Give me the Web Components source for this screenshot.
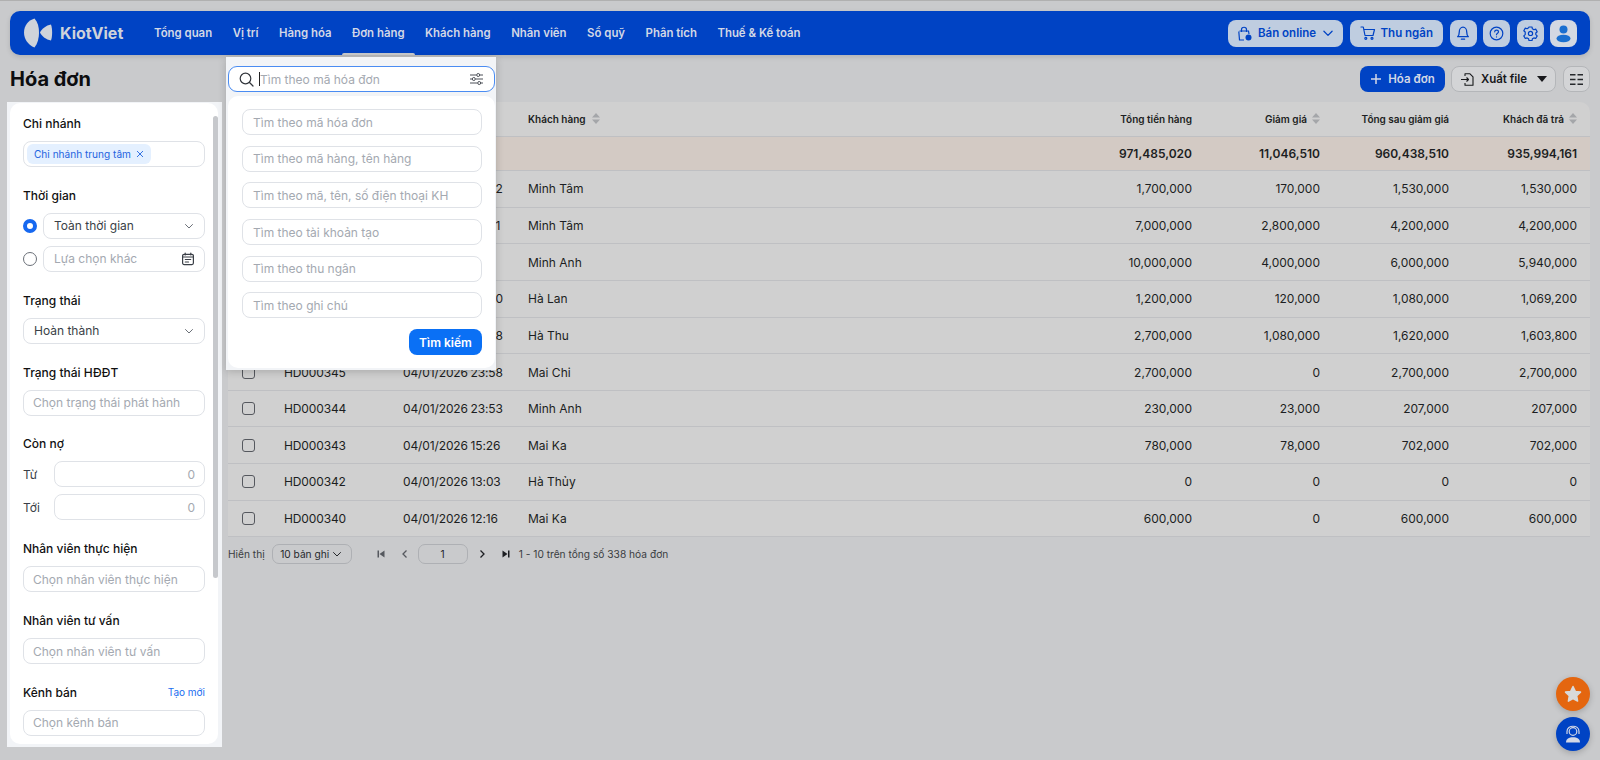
<!DOCTYPE html>
<html lang="vi">
<head>
<meta charset="utf-8">
<title>Hóa đơn</title>
<style>
    html, body { margin: 0; height: 100%; overflow: hidden; background: #c9cacc; font-family: Inter, "Liberation Sans", sans-serif; }
</style>
</head>
<body>
<kv-app></kv-app>
<script>
const chevron = `<svg width="12" height="12" viewBox="0 0 12 12" fill="none" stroke="currentColor" stroke-width="1" stroke-linecap="round" stroke-linejoin="round"><path d="M2.500 4.500 6 8l3.500-3.500"/></svg>`;

class KvHeader extends HTMLElement {
    constructor() {
        super();
        this.shadowroot = this.attachShadow({mode: 'open'});
    }
    connectedCallback() {
        const nav = ['Tổng quan', 'Vị trí', 'Hàng hóa', 'Đơn hàng', 'Khách hàng', 'Nhân viên', 'Sổ quỹ', 'Phân tích', 'Thuế & Kế toán'];
        this.shadowroot.innerHTML = `
            <style>
                :host { display: flex; align-items: center; height: 44px; margin: 0 10px; padding: 0 13px 0 14px; box-sizing: border-box; background: #0043c4; border-radius: 10px; box-shadow: 0 2px 5px rgba(0,0,0,.12); }
                .logo { display: flex; align-items: center; gap: 7px; width: 130px; color: #cfd3da; font-size: 16px; font-weight: 700; }
                nav { display: flex; gap: 20.500px; flex: 1; height: 100%; }
                nav a { position: relative; display: flex; align-items: center; color: #d3d8e6; font-size: 11.400px; font-weight: 600; white-space: nowrap; }
                nav a.active::after { content: ''; position: absolute; left: -10px; right: -10px; bottom: 0; height: 2px; background: #c9cacc; border-radius: 2px 2px 0 0; }
                .tools { display: flex; gap: 6.500px; }
                .btn { display: flex; align-items: center; justify-content: center; gap: 5px; height: 27px; min-width: 27px; box-sizing: border-box; background: #bfcde0; color: #0043c4; border-radius: 8px; font-size: 11.500px; font-weight: 600; white-space: nowrap; }
                .online { width: 115px; }
                .cashier { width: 93.500px; }
            </style>
            <div class="logo">
                <svg width="29" height="30" viewBox="0 0 29 30" fill="#cfd3da"><path d="M10.500.5C4 2.500 0 8 0 14.500S4 27 10.500 29.500C13.800 25.500 15 20 15 14.500S13.800 4 10.500.5Z"/><path d="M16 14.500C18 10.500 22 7.500 27 6.500 28.500 10.500 28.500 18.500 27 22.500 22 21.500 18 18.500 16 14.500Z"/></svg>
                <span>KiotViet</span>
            </div>
            <nav>${nav.map(n => `<a class="${n === 'Đơn hàng' ? 'active' : ''}">${n}</a>`).join('')}</nav>
            <div class="tools">
                <div class="btn online">
                    <svg width="17" height="17" viewBox="0 0 17 17" fill="none" stroke="currentColor" stroke-width="1.200"><path d="M3.500 6H12.500L13 9M8 15H3.500L2.800 6.500M5.500 7V4.500C5.500 1.500 10.500 1.500 10.500 4.500V7"/><circle cx="12.500" cy="12.500" r="3" fill="currentColor" stroke="none"/></svg>
                    <span>Bán online</span>
                    <svg width="14" height="14" viewBox="0 0 12 12" fill="none" stroke="currentColor" stroke-width="1.100" stroke-linecap="round" stroke-linejoin="round"><path d="M2.500 4.500 6 8l3.500-3.500"/></svg>
                </div>
                <div class="btn cashier">
                    <svg width="16" height="16" viewBox="0 0 16 16" fill="none" stroke="currentColor" stroke-width="1.200" stroke-linejoin="round" stroke-linecap="round"><path d="M1 2h2.300l1.700 8.500h8L14.500 4.500H3.700"/><circle cx="5.800" cy="13.300" r="1"/><circle cx="12" cy="13.300" r="1"/></svg>
                    <span>Thu ngân</span>
                </div>
                <div class="btn">
                    <svg width="16" height="16" viewBox="0 0 15 15" fill="none" stroke="currentColor" stroke-width="1.200" stroke-linecap="round" stroke-linejoin="round"><path d="M2.500 11h10c-1-1-1.500-2-1.500-4.500C11 4 9.500 2 7.500 2S4 4 4 6.500C4 9 3.500 10 2.500 11ZM6 13.300h3"/></svg>
                </div>
                <div class="btn">
                    <svg width="15" height="15" viewBox="0 0 15 15" fill="none" stroke="currentColor" stroke-width="1.200" stroke-linecap="round"><circle cx="7.500" cy="7.500" r="6.300"/><path d="M5.700 5.800C5.700 3.500 9.500 3.500 9.500 5.800 9.500 7.200 7.500 7.200 7.500 8.700M7.500 10.800v.2"/></svg>
                </div>
                <div class="btn">
                    <svg width="15" height="15" viewBox="0 0 15 15" fill="none" stroke="currentColor" stroke-width="1.200" stroke-linejoin="round"><path d="M6 1.200h3l.4 1.800 1.500.9 1.800-.6 1.500 2.600-1.400 1.300v1.600l1.400 1.300-1.500 2.600-1.800-.6-1.500.9-.4 1.800H6l-.4-1.800-1.500-.9-1.800.6-1.500-2.600 1.400-1.300V6.200L.8 4.900l1.500-2.600 1.800.6 1.500-.9Z" transform="translate(0 -.2)"/><circle cx="7.500" cy="7.400" r="2.100"/></svg>
                </div>
                <div class="btn" style="background:#d3d8e2">
                    <svg width="19" height="19" viewBox="0 0 19 19" fill="#1a6fd0"><circle cx="9.500" cy="5.500" r="4"/><ellipse cx="9.500" cy="14.500" rx="7" ry="3.800"/></svg>
                </div>
            </div>
        `;
    }
}

class KvField extends HTMLElement {
    constructor() {
        super();
        this.shadowroot = this.attachShadow({mode: 'open'});
    }
    connectedCallback() {
        const link = this.getAttribute('link');
        this.shadowroot.innerHTML = `
            <style>
                :host { display: flex; flex-direction: column; gap: 9px; }
                .label { display: flex; justify-content: space-between; align-items: center; height: 17px; font-size: 12px; font-weight: 500; color: #111; }
                .link { font-size: 10px; font-weight: 400; color: #1a6ef0; }
                .body { display: flex; flex-direction: column; gap: 7px; }
            </style>
            <div class="label"><span>${this.getAttribute('label')}</span>${link ? `<span class="link">${link}</span>` : ''}</div>
            <div class="body"><slot></slot></div>
        `;
    }
}

class KvInput extends HTMLElement {
    constructor() {
        super();
        this.shadowroot = this.attachShadow({mode: 'open'});
    }
    connectedCallback() {
        const value = this.getAttribute('value');
        const pad = this.getAttribute('pad') || '9';
        this.shadowroot.innerHTML = `
            <style>
                :host { display: flex; align-items: center; flex: 1 1 auto; width: 100%; min-width: 0; height: 26px; box-sizing: border-box; padding: 0 9px 0 ${pad}px; background: #fff; border: 1px solid #dfe2e7; border-radius: 8px; font-size: 12px; color: #a4a9b1; }
                :host([end]) { justify-content: flex-end; }
                .text { flex: 1; white-space: nowrap; }
                .value { color: #3a3f47; }
                :host([end]) .text { flex: none; }
                ::slotted(*) { flex: none; }
            </style>
            <span class="text ${value ? 'value' : ''}">${value || this.getAttribute('placeholder') || ''}</span>
            <slot></slot>
        `;
    }
}

class KvRadio extends HTMLElement {
    constructor() {
        super();
        this.shadowroot = this.attachShadow({mode: 'open'});
    }
    connectedCallback() {
        this.shadowroot.innerHTML = `
            <style>
                :host { display: flex; align-items: center; gap: 6px; }
                .dot { width: 14px; height: 14px; box-sizing: border-box; flex: none; border-radius: 50%; border: 1px solid #6b7078; background: #fff; }
                :host([checked]) .dot { border: 4px solid #1668f0; }
            </style>
            <span class="dot"></span>
            <slot></slot>
        `;
    }
}

class KvSidebar extends HTMLElement {
    constructor() {
        super();
        this.shadowroot = this.attachShadow({mode: 'open'});
    }
    connectedCallback() {
        this.shadowroot.innerHTML = `
            <style>
                :host { position: relative; display: block; flex: none; width: 215px; height: 645px; margin-left: 7px; box-sizing: border-box; padding: 1px 4px 3px 3px; background: #f2f4f7; }
                .card { display: flex; flex-direction: column; gap: 19.850px; height: 100%; box-sizing: border-box; padding: 12px 13px 0 13px; overflow: hidden; background: #fff; border-radius: 10px; }
                .thumb { position: absolute; left: 206px; top: 14px; width: 5px; height: 462px; background: #c6c8cc; border-radius: 3px; }
                .tag { display: inline-flex; align-items: center; gap: 5px; height: 20px; margin-left: -6px; padding: 0 7px; background: #e4f0ff; color: #1f64e0; border-radius: 6px; font-size: 10.100px; white-space: nowrap; }
                .range { display: flex; align-items: center; }
                .range span { flex: none; width: 31px; font-size: 12px; color: #3a3f47; }
                .chip { display: flex; align-items: center; height: 26px; box-sizing: border-box; padding-left: 9px; background: #fff; border: 1px solid #dfe2e7; border-radius: 8px; }
                .arrow { display: flex; color: #6b7078; }
            </style>
            <div class="card">
                <kv-field label="Chi nhánh">
                    <div class="chip"><span class="tag">Chi nhánh trung tâm <svg width="8" height="8" viewBox="0 0 8 8" stroke="currentColor" stroke-width=".9"><path d="M1 1l6 6M7 1 1 7"/></svg></span></div>
                </kv-field>
                <kv-field label="Thời gian">
                    <kv-radio checked><kv-input value="Toàn thời gian" pad="10"><span class="arrow">${chevron}</span></kv-input></kv-radio>
                    <kv-radio><kv-input placeholder="Lựa chọn khác" pad="10"><svg width="14" height="14" viewBox="0 0 14 14" fill="none" stroke="#3a3f47" stroke-width="1.200" stroke-linecap="round"><rect x="1.600" y="2.300" width="10.800" height="10.300" rx="1.500"/><path d="M4.200 1v2M9.800 1v2M1.800 5h10.500M4.300 7.500h5.400M4.300 10h3.200"/></svg></kv-input></kv-radio>
                </kv-field>
                <kv-field label="Trạng thái">
                    <kv-input value="Hoàn thành" pad="10"><span class="arrow">${chevron}</span></kv-input>
                </kv-field>
                <kv-field label="Trạng thái HĐĐT"><kv-input placeholder="Chọn trạng thái phát hành"></kv-input></kv-field>
                <kv-field label="Còn nợ">
                    <div class="range"><span>Từ</span><kv-input end placeholder="0"></kv-input></div>
                    <div class="range"><span>Tới</span><kv-input end placeholder="0"></kv-input></div>
                </kv-field>
                <kv-field label="Nhân viên thực hiện"><kv-input placeholder="Chọn nhân viên thực hiện"></kv-input></kv-field>
                <kv-field label="Nhân viên tư vấn"><kv-input placeholder="Chọn nhân viên tư vấn"></kv-input></kv-field>
                <kv-field label="Kênh bán" link="Tạo mới"><kv-input placeholder="Chọn kênh bán"></kv-input></kv-field>
            </div>
            <div class="thumb"></div>
        `;
    }
}

class KvTable extends HTMLElement {
    constructor() {
        super();
        this.shadowroot = this.attachShadow({mode: 'open'});
    }
    connectedCallback() {
        // first five rows: the search popover covers code and date, only the last digit sticks out
        const rows = [
            ['', '2', 'Minh Tâm', '1,700,000', '170,000', '1,530,000', '1,530,000'],
            ['', '1', 'Minh Tâm', '7,000,000', '2,800,000', '4,200,000', '4,200,000'],
            ['', '', 'Minh Anh', '10,000,000', '4,000,000', '6,000,000', '5,940,000'],
            ['', '0', 'Hà Lan', '1,200,000', '120,000', '1,080,000', '1,069,200'],
            ['', '8', 'Hà Thu', '2,700,000', '1,080,000', '1,620,000', '1,603,800'],
            ['HD000345', '04/01/2026 23:58', 'Mai Chi', '2,700,000', '0', '2,700,000', '2,700,000'],
            ['HD000344', '04/01/2026 23:53', 'Minh Anh', '230,000', '23,000', '207,000', '207,000'],
            ['HD000343', '04/01/2026 15:26', 'Mai Ka', '780,000', '78,000', '702,000', '702,000'],
            ['HD000342', '04/01/2026 13:03', 'Hà Thủy', '0', '0', '0', '0'],
            ['HD000340', '04/01/2026 12:16', 'Mai Ka', '600,000', '0', '600,000', '600,000'],
        ];
        const sort = `<svg class="sort" width="8" height="11" viewBox="0 0 8 11" fill="#a4a6a9"><path d="M4 0 8 4.500H0ZM0 6.500H8L4 11Z"/></svg>`;
        this.shadowroot.innerHTML = `
            <style>
                :host { display: block; font-size: 12px; color: #1c1e22; }
                .row { display: grid; grid-template-columns: 56px 119px 125px 1fr 130px 128px 129px 128px; align-items: center; height: 36.650px; box-sizing: border-box; padding-right: 13px; border-bottom: 1px solid #bfc0c3; }
                .head { height: 34.500px; font-size: 10px; font-weight: 600; background: #d0d0d0; border-radius: 10px 10px 0 0; }
                .total { height: 34.500px; font-weight: 600; background: #d3cac4; }
                .body { background: #d0d0d0; }
                .num { text-align: right; }
                .code { letter-spacing: -.12px; word-spacing: -.6px; }
                .tail { padding-left: 92.500px; }
                .head .sortable { display: flex; align-items: center; gap: 6px; }
                .head .num { display: flex; justify-content: flex-end; align-items: center; gap: 5px; }
                .box { display: block; width: 13px; height: 13px; margin-left: 14px; border: 1px solid #55585e; border-radius: 3px; box-sizing: border-box; }
            </style>
            <div class="row head">
                <span></span><span></span><span></span>
                <span class="sortable">Khách hàng ${sort}</span>
                <span class="num">Tổng tiền hàng</span>
                <span class="num">Giảm giá ${sort}</span>
                <span class="num">Tổng sau giảm giá</span>
                <span class="num">Khách đã trả ${sort}</span>
            </div>
            <div class="row total">
                <span></span><span></span><span></span><span></span>
                <span class="num">971,485,020</span>
                <span class="num">11,046,510</span>
                <span class="num">960,438,510</span>
                <span class="num">935,994,161</span>
            </div>
            <div class="body">
                ${rows.map(r => `
                    <div class="row">
                        <span class="box"></span>
                        <span class="code">${r[0]}</span><span class="code ${r[0] ? '' : 'tail'}">${r[1]}</span><span>${r[2]}</span>
                        <span class="num">${r[3]}</span><span class="num">${r[4]}</span><span class="num">${r[5]}</span><span class="num">${r[6]}</span>
                    </div>`).join('')}
            </div>
        `;
    }
}

class KvPagination extends HTMLElement {
    constructor() {
        super();
        this.shadowroot = this.attachShadow({mode: 'open'});
    }
    connectedCallback() {
        this.shadowroot.innerHTML = `
            <style>
                :host { display: flex; align-items: center; height: 20px; margin-top: 7px; font-size: 10.200px; color: #3a3d42; }
                .select { display: flex; align-items: center; justify-content: center; gap: 2px; width: 80px; height: 20px; margin-left: 7px; box-sizing: border-box; border: 1px solid #aeb0b4; border-radius: 7px; color: #26282c; }
                .pager { display: flex; align-items: center; margin-left: 24px; }
                .pager svg { display: block; flex: none; }
                .page { display: flex; align-items: center; justify-content: center; width: 50px; height: 20px; box-sizing: border-box; margin: 0 9px 0 8px; border: 1px solid #aeb0b4; border-radius: 7px; color: #26282c; }
                .count { margin-left: 8px; }
            </style>
            <span>Hiển thị</span>
            <div class="select">10 bản ghi ${chevron}</div>
            <div class="pager">
                <svg style="margin-right:14px" width="10" height="10" viewBox="0 0 10 10" fill="#55585e"><path d="M1.500 1.500H3V8.500H1.500ZM8.500 1.500V8.500L3.500 5Z"/></svg>
                <svg width="10" height="10" viewBox="0 0 10 10" fill="none" stroke="#55585e" stroke-width="1.300"><path d="M6.500 1.500 3 5l3.500 3.500"/></svg>
                <div class="page">1</div>
                <svg style="margin-right:14px" width="10" height="10" viewBox="0 0 10 10" fill="none" stroke="#1c1e22" stroke-width="1.300"><path d="M3.500 1.500 7 5 3.500 8.500"/></svg>
                <svg width="10" height="10" viewBox="0 0 10 10" fill="#1c1e22"><path d="M8.500 1.500H7V8.500H8.500ZM1.500 1.500V8.500L6.500 5Z"/></svg>
            </div>
            <span class="count">1 - 10 trên tổng số 338 hóa đơn</span>
        `;
    }
}

class KvSearchPopover extends HTMLElement {
    constructor() {
        super();
        this.shadowroot = this.attachShadow({mode: 'open'});
    }
    connectedCallback() {
        const fields = ['Tìm theo mã hóa đơn', 'Tìm theo mã hàng, tên hàng', 'Tìm theo mã, tên, số điện thoại KH', 'Tìm theo tài khoản tạo', 'Tìm theo thu ngân', 'Tìm theo ghi chú'];
        this.shadowroot.innerHTML = `
            <style>
                :host { position: absolute; left: 226px; top: 57px; width: 270px; height: 313px; box-sizing: border-box; padding: 9px 1px 2px 2px; background: #f2f4f7; box-shadow: 0 2px 8px rgba(0,0,0,.18); font-size: 12px; color: #a4a9b1; }
                .search { display: flex; align-items: center; height: 26px; box-sizing: border-box; padding: 0 10px; background: #fff; border: 1px solid #4a8cf2; border-radius: 9px; }
                .search svg { flex: none; }
                .caret { width: 1px; height: 14px; margin: 0 0 0 5px; background: #222; }
                .search span { flex: 1; }
                .panel { display: flex; flex-direction: column; gap: 10.700px; height: 272px; margin-top: 4px; box-sizing: border-box; padding: 13px 13px 0 14px; background: #fff; border-radius: 10px; }
                kv-input { flex: none; }
                button { align-self: flex-end; width: 73px; height: 26px; margin-top: 0; padding: 0; border: 0; background: #0a70f5; color: #fff; border-radius: 8px; font: 600 12px Inter, "Liberation Sans", sans-serif; }
            </style>
            <div class="search">
                <svg width="15" height="15" viewBox="0 0 15 15" fill="none" stroke="#33373d" stroke-width="1.200" stroke-linecap="round"><circle cx="6.500" cy="6.500" r="5.300"/><path d="m10.500 10.500 3.500 3.500"/></svg>
                <i class="caret"></i>
                <span>Tìm theo mã hóa đơn</span>
                <svg width="15" height="14" viewBox="0 0 15 14" fill="none" stroke="#4d5158"><path d="M1 3h6.500M11 3h3M1 7h2M6.500 7H14M1 11h7.500M12 11h2"/><circle cx="9.200" cy="3" r="1.500"/><circle cx="4.800" cy="7" r="1.500"/><circle cx="10.200" cy="11" r="1.500"/></svg>
            </div>
            <div class="panel">
                ${fields.map(f => `<kv-input placeholder="${f}" pad="10"></kv-input>`).join('')}
                <button>Tìm kiếm</button>
            </div>
        `;
    }
}

class KvFab extends HTMLElement {
    constructor() {
        super();
        this.shadowroot = this.attachShadow({mode: 'open'});
    }
    connectedCallback() {
        this.shadowroot.innerHTML = `
            <style>
                :host { position: absolute; right: 10px; bottom: 9px; display: flex; flex-direction: column; gap: 6px; }
                div { display: flex; align-items: center; justify-content: center; width: 34px; height: 34px; border-radius: 50%; box-shadow: 0 2px 6px rgba(0,0,0,.2); }
            </style>
            <div style="background:#e4660f"><svg width="20" height="20" viewBox="0 0 20 20" fill="#d9d9d9" stroke="#d9d9d9" stroke-width="1.500" stroke-linejoin="round"><path d="m10 2.500 2.300 4.900 5.200.7-3.800 3.700.9 5.300-4.600-2.600-4.600 2.600.9-5.300-3.800-3.700 5.200-.7Z"/></svg></div>
            <div style="background:#0043c4"><svg width="22" height="22" viewBox="0 0 22 22" fill="none" stroke="#d3d8e6" stroke-width="1.200"><path d="M5 11V8.500C5 1.500 17 1.500 17 8.500V11"/><circle cx="11" cy="8.500" r="3.800" fill="#0043c4"/><path d="M4 19.500C4 15.800 7 14.300 11 14.300S18 15.800 18 19.500Z" fill="#d3d8e6" stroke="none"/></svg></div>
        `;
    }
}

class KvApp extends HTMLElement {
    constructor() {
        super();
        this.shadowroot = this.attachShadow({mode: 'open'});
    }
    connectedCallback() {
        this.shadowroot.innerHTML = `
            <style>
                :host { position: relative; display: flex; flex-direction: column; width: 1600px; height: 760px; box-sizing: border-box; padding-top: 11px; overflow: hidden; background: linear-gradient(#b0b0b0 0 1px, #c9cacc 1px 3px); background-color: #c9cacc; background-repeat: no-repeat; font-family: Inter, "Liberation Sans", sans-serif; }
                .bar { display: flex; align-items: center; height: 26px; margin: 11px 10px 10px; }
                h1 { flex: 1; margin: 0; font-size: 20px; font-weight: 700; color: #0c0d0f; }
                .btn { display: flex; align-items: center; justify-content: center; gap: 6px; height: 26px; box-sizing: border-box; border-radius: 8px; font-size: 11.500px; font-weight: 600; white-space: nowrap; }
                .add { width: 85px; background: #0043c4; color: #d3d8e6; }
                .file { width: 105px; margin-left: 6px; background: #d3d4d6; border: 1px solid #b4b6b9; color: #17181b; }
                .cols { width: 27px; margin-left: 7px; background: #d3d4d6; border: 1px solid #b4b6b9; }
                .main { display: flex; gap: 6px; align-items: flex-start; }
                .content { flex: 1; min-width: 0; margin-right: 10px; }
            </style>
            <kv-header></kv-header>
            <div class="bar">
                <h1>Hóa đơn</h1>
                <div class="btn add"><svg width="12" height="12" viewBox="0 0 12 12" stroke="currentColor" stroke-width="1.500"><path d="M6 1v10M1 6h10"/></svg>Hóa đơn</div>
                <div class="btn file"><svg width="15" height="15" viewBox="0 0 15 15" fill="none" stroke="currentColor" stroke-width="1.100" stroke-linejoin="round"><path d="M5 4V1.800H10L13 4.800V13.200H5V11M1 7.500H8.500M6.500 5.500 8.500 7.500 6.500 9.500"/></svg>Xuất file <svg width="10" height="6" viewBox="0 0 10 6" fill="currentColor" style="margin-left:4px"><path d="M0 0H10L5 6Z"/></svg></div>
                <div class="btn cols"><svg width="13" height="11" viewBox="0 0 13 11" fill="#26282c"><path d="M0 0H5.500V1.500H0ZM7.500 0H13V1.500H7.500ZM0 4.700H5.500V6.200H0ZM7.500 4.700H13V6.200H7.500ZM0 9.400H5.500V10.900H0ZM7.500 9.400H13V10.900H7.500Z"/></svg></div>
            </div>
            <div class="main">
                <kv-sidebar></kv-sidebar>
                <div class="content">
                    <kv-table></kv-table>
                    <kv-pagination></kv-pagination>
                </div>
            </div>
            <kv-search-popover></kv-search-popover>
            <kv-fab></kv-fab>
        `;
    }
}

customElements.define('kv-header', KvHeader);
customElements.define('kv-field', KvField);
customElements.define('kv-input', KvInput);
customElements.define('kv-radio', KvRadio);
customElements.define('kv-sidebar', KvSidebar);
customElements.define('kv-table', KvTable);
customElements.define('kv-pagination', KvPagination);
customElements.define('kv-search-popover', KvSearchPopover);
customElements.define('kv-fab', KvFab);
customElements.define('kv-app', KvApp);
</script>
</body>
</html>
